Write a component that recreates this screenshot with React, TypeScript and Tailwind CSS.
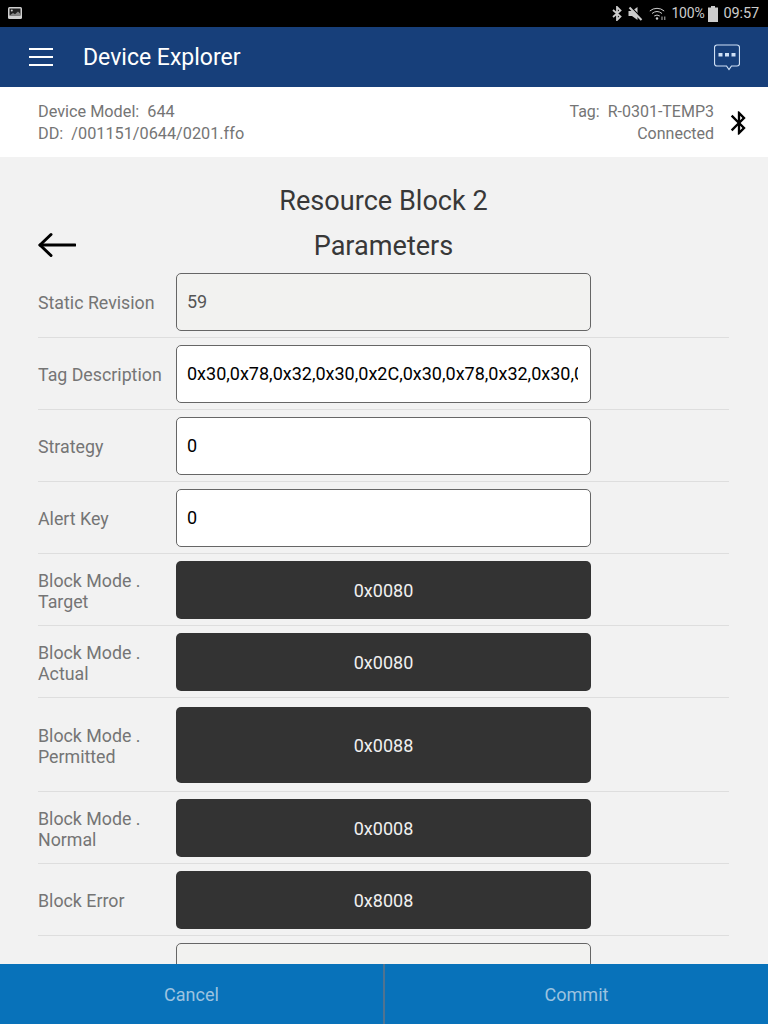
import { MdBluetooth } from 'react-icons/md';

const font = { fontFamily: 'Roboto, sans-serif' };

type Row = {
    label: string;
    value: string;
    kind: 'readonly' | 'input' | 'button';
    tall?: boolean;
};

const rows: Row[] = [
    { label: 'Static Revision', value: '59', kind: 'readonly' },
    { label: 'Tag Description', value: '0x30,0x78,0x32,0x30,0x2C,0x30,0x78,0x32,0x30,0x2C,0x30,0x78', kind: 'input' },
    { label: 'Strategy', value: '0', kind: 'input' },
    { label: 'Alert Key', value: '0', kind: 'input' },
    { label: 'Block Mode . Target', value: '0x0080', kind: 'button' },
    { label: 'Block Mode . Actual', value: '0x0080', kind: 'button' },
    { label: 'Block Mode . Permitted', value: '0x0088', kind: 'button', tall: true },
    { label: 'Block Mode . Normal', value: '0x0008', kind: 'button' },
    { label: 'Block Error', value: '0x8008', kind: 'button' },
];

function ParamRow({ row }: { row: Row }) {
    const wraps = row.label.startsWith('Block Mode');
    return (
        <div className={`flex items-center border-b border-[#dedede] ${row.tall ? 'pt-[9px] pb-[8px]' : 'pt-[7px] pb-[6px]'}`}>
            <div className={`w-[138px] shrink-0 text-[17.8px] leading-[21px] text-[#757575] ${wraps ? 'pt-[2px]' : 'pt-[1px]'}`}>{row.label}</div>
            {row.kind === 'button' ? (
                <div className={`flex w-[415px] items-center justify-center rounded-[5px] bg-[#333333] text-[18px] text-[#f0f0f0] ${row.tall ? 'h-[76px]' : 'h-[58px]'}`}>
                    {row.value}
                </div>
            ) : (
                <div
                    className={`flex h-[58px] w-[415px] items-center rounded-[5px] border border-[#666666] pb-[1px] pl-[10px] pr-[12px] text-[18px] ${
                        row.kind === 'readonly' ? 'bg-[#f2f2f0] text-[#555555]' : 'bg-white text-black'
                    }`}
                >
                    <span className="block overflow-hidden whitespace-nowrap">{row.value}</span>
                </div>
            )}
        </div>
    );
}

export default function App() {
    return (
        <div className="flex h-[1024px] w-[768px] flex-col overflow-hidden bg-[#f2f2f2]" style={font}>
            {/* status bar */}
            <div className="flex h-[27px] shrink-0 items-center justify-between bg-black pl-[8px] pr-[9px] text-[#cccccc]">
                <svg width="14" height="13" viewBox="0 0 14 13">
                    <rect x="0" y="0" width="14" height="12" rx="1.5" fill="#d0d0d0" />
                    <rect x="1.5" y="1.5" width="11" height="7" fill="#222222" />
                    <circle cx="3.8" cy="3.6" r="1" fill="#d0d0d0" />
                    <path d="M1.5 8.5 L5 6 L7 7.2 L10 4.5 L12.5 7 V8.5 Z" fill="#888888" />
                </svg>
                <div className="flex items-center text-[14.5px]">
                    <svg width="10" height="15" viewBox="0 0 10 15" fill="none" stroke="#cccccc" strokeWidth="1.8">
                        <path d="M1 4 L8.5 10.5 L5 14 V1 L8.5 4.5 L1 11" />
                    </svg>
                    <svg className="ml-[6px]" width="15" height="15" viewBox="0 0 15 15" fill="#cccccc">
                        <path d="M0.5 5 H4 L9.5 1 V14 L4 10 H0.5 Z" />
                        <path d="M2.5 0.5 L14.5 13" stroke="#000000" strokeWidth="1.2" />
                        <path d="M1.5 1.5 L13.5 14" stroke="#cccccc" strokeWidth="2" />
                    </svg>
                    <svg className="ml-[6px]" width="18" height="15" viewBox="0 0 18 15" fill="none" stroke="#cccccc" strokeWidth="1">
                        <path d="M0.8 5 A11 11 0 0 1 15.2 5" />
                        <path d="M3 7.5 A8 8 0 0 1 13 7.5" />
                        <path d="M5.2 10 A5 5 0 0 1 10.8 10" />
                        <circle cx="8" cy="12.5" r="1.2" fill="#cccccc" stroke="none" />
                        <path d="M13 10.5 V14 M15.8 10.5 V14" strokeWidth="0.9" />
                    </svg>
                    <span className="ml-[4px] w-[34px] text-[14px] tracking-[-0.2px]">100%</span>
                    <svg className="ml-[3px]" width="10" height="16" viewBox="0 0 10 16" fill="#cccccc">
                        <rect x="3" y="0" width="4" height="2" />
                        <rect x="0" y="1.5" width="10" height="14.5" />
                    </svg>
                    <span className="ml-[5px] tracking-[-0.1px]">09:57</span>
                </div>
            </div>

            {/* app bar */}
            <div className="flex h-[60px] shrink-0 items-center justify-between bg-[#173f7a] pl-[29px] pr-[28px]">
                <div className="flex items-center">
                    <div className="flex w-[24px] flex-col gap-[6px]">
                        <div className="h-[2px] bg-white" />
                        <div className="h-[2px] bg-white" />
                        <div className="h-[2px] bg-white" />
                    </div>
                    <div className="ml-[30px] pt-[2px] text-[23px] text-white">Device Explorer</div>
                </div>
                <svg width="26" height="27" viewBox="0 0 26 27" fill="none">
                    <path d="M3 1 H23 A2.5 2.5 0 0 1 25.5 3.5 V19.5 A2.5 2.5 0 0 1 23 22 H17.5 L15 25.5 L12.5 22 H3 A2.5 2.5 0 0 1 0.5 19.5 V3.5 A2.5 2.5 0 0 1 3 1 Z" stroke="#cfe0f5" strokeWidth="1.2" />
                    <rect x="4.5" y="9" width="4" height="3.5" fill="#cfe0f5" />
                    <rect x="11" y="9" width="4" height="3.5" fill="#cfe0f5" />
                    <rect x="17.5" y="9" width="4" height="3.5" fill="#cfe0f5" />
                </svg>
            </div>

            {/* device info */}
            <div className="flex h-[70px] shrink-0 items-center justify-between bg-white pl-[38px] pr-[15px] pt-[2px] leading-[22px] text-[#757575]">
                <div className="text-[16.25px]">
                    <div className="whitespace-pre">Device Model:  644</div>
                    <div className="whitespace-pre">DD:  /001151/0644/0201.ffo</div>
                </div>
                <div className="flex items-center text-[16px]">
                    <div className="text-right">
                        <div className="whitespace-pre">Tag:  R-0301-TEMP3</div>
                        <div>Connected</div>
                    </div>
                    <MdBluetooth size={28} className="ml-[11px] text-black" />
                </div>
            </div>

            {/* parameters */}
            <div className="min-h-0 flex-1 overflow-hidden pl-[38px] pr-[39px]">
                <div className="relative h-[109px] pt-[22px] text-center text-[27.1px] leading-[45px] text-[#383838]">
                    <div>Resource Block 2</div>
                    <div>Parameters</div>
                    <svg className="absolute left-0 top-[75px]" width="38" height="26" viewBox="0 0 38 26" fill="none" stroke="black" strokeWidth="3" strokeLinecap="round" strokeLinejoin="round">
                        <path d="M2 13 H37" />
                        <path d="M13 2.5 L2 13 L13 23.5" />
                    </svg>
                </div>
                {rows.map((row) => (
                    <ParamRow key={row.label} row={row} />
                ))}
                <div className="pt-[7px] pl-[138px]">
                    <div className="h-[58px] w-[415px] rounded-[5px] border border-[#666666] bg-[#f2f2f0]" />
                </div>
            </div>

            {/* footer */}
            <div className="flex h-[60px] shrink-0 bg-[#0872ba] text-[18px] text-[#9cc3e0]">
                <div className="flex w-[383px] items-center justify-center">Cancel</div>
                <div className="w-[2px] bg-[#4f7391]" />
                <div className="flex flex-1 items-center justify-center">Commit</div>
            </div>
        </div>
    );
}
